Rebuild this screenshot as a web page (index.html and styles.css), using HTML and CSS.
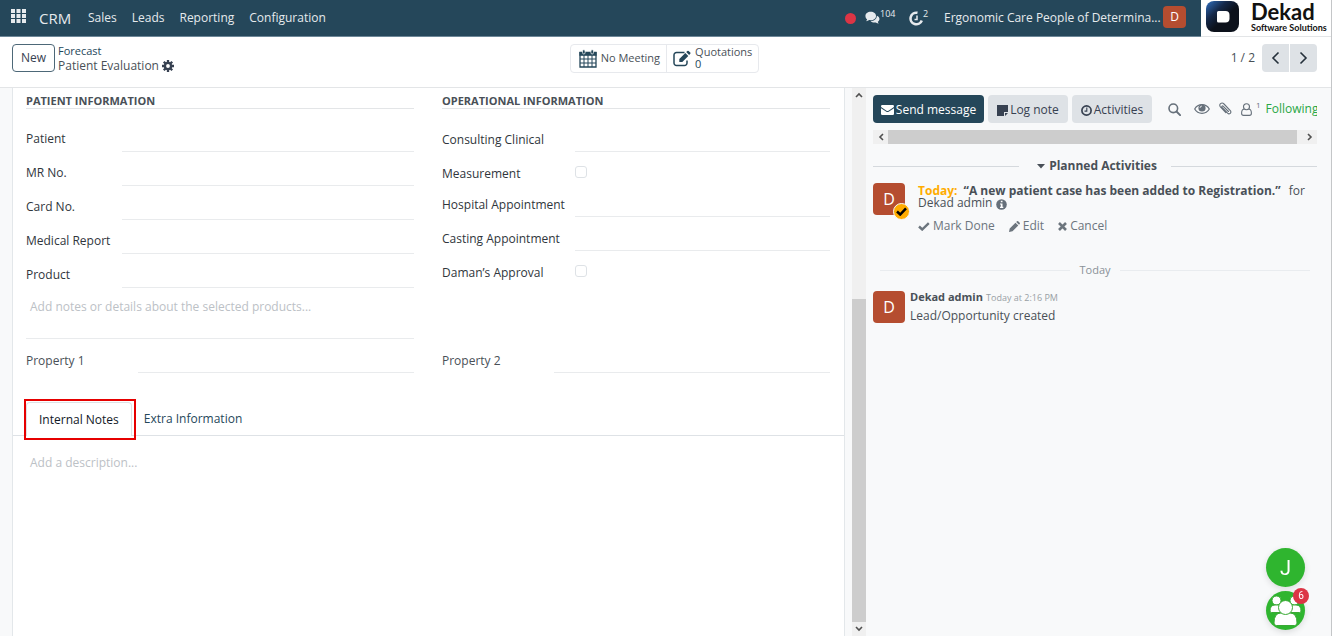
FILE: index.html
```html
<!DOCTYPE html>
<html lang="en">
<head>
  <meta charset="UTF-8">
  <meta name="viewport" content="width=device-width, initial-scale=1.0">
  <title>Patient Evaluation</title>
  <link rel="stylesheet" href="styles.css">
</head>
<body>
  <header class="navbar">
    <button class="apps" aria-label="Apps">
      <svg width="15" height="14" viewBox="0 0 15 14"><path d="M0 0h4v4H0zM5.500 0h4v4h-4zM11 0h4v4h-4zM0 5h4v4H0zM5.500 5h4v4h-4zM11 5h4v4h-4zM0 10h4v4H0zM5.500 10h4v4h-4zM11 10h4v4h-4z"/></svg>
    </button>
    <a class="brand" href="#">CRM</a>
    <nav class="menu">
      <a href="#">Sales</a>
      <a href="#">Leads</a>
      <a href="#">Reporting</a>
      <a href="#">Configuration</a>
    </nav>
    <div class="systray">
      <span class="dot"></span>
      <button class="tray-btn messages" aria-label="Messages">
        <svg width="15" height="14" viewBox="0 0 17 15"><path d="M6.500.5C10 .5 12.500 2.500 12.500 5.200S10 10 6.500 10c-.6 0-1.200-.1-1.700-.2-1 .8-2.300 1.300-3.600 1.300.6-.6 1.100-1.300 1.200-2.100C1.200 8.100.5 6.800.5 5.200.5 2.500 3 .5 6.500.5z"/><path d="M13.400 5c1.800.7 3 2 3 3.600 0 1.300-.7 2.400-1.900 3.100.1.800.5 1.500 1.200 2.100-1.300 0-2.500-.5-3.500-1.300-2 .4-4.500 0-5.900-1.400C10.500 11 13.500 8.500 13.400 5z"/></svg>
        <sup>104</sup>
      </button>
      <button class="tray-btn activity" aria-label="Activities">
        <svg width="14" height="15" viewBox="0 0 14 15"><path d="M8.500 1.800A5.800 5.800 0 1 0 12.800 9.500" fill="none" stroke="currentColor" stroke-width="2.600"/><path d="M8 4.500v4H5.500" fill="none" stroke="currentColor" stroke-width="1.500"/></svg>
        <sup>2</sup>
      </button>
      <button class="company">Ergonomic Care People of Determina...</button>
      <button class="avatar avatar-small">D</button>
    </div>
    <a class="logo" href="#">
      <svg width="33" height="31" viewBox="0 0 33 31">
        <defs>
          <linearGradient id="logo-fill" x1="0" y1="0" x2="0.8" y2="0.8">
            <stop offset="0" stop-color="#2f6fc0"/>
            <stop offset="0.4" stop-color="#15294a"/>
            <stop offset="0.7" stop-color="#0c111b"/>
          </linearGradient>
        </defs>
        <rect width="33" height="31" rx="8" fill="url(#logo-fill)"/>
        <path d="M12.500 10h7a4 4 0 0 1 4 4v3.500a4 4 0 0 1-4 4h-7a1.500 1.500 0 0 1-1.500-1.500v-8.500a1.500 1.500 0 0 1 1.500-1.500z" fill="#fff"/>
      </svg>
      <span class="logo-text"><strong>Dekad</strong><small>Software Solutions</small></span>
    </a>
  </header>

  <div class="control-panel">
    <div class="panel-left">
      <button class="btn-new">New</button>
      <div class="breadcrumb">
        <a href="#">Forecast</a>
        <div class="current">
          <span>Patient Evaluation</span>
          <button aria-label="Settings">
            <svg width="12" height="12" viewBox="0 0 12 12"><g fill="none" stroke="currentColor"><circle cx="6" cy="6" r="3.100" stroke-width="2.400"/><path d="M6 0v2.500M6 9.500V12M0 6h2.500M9.500 6H12M1.800 1.800l1.700 1.700M8.500 8.500l1.700 1.700M1.800 10.200l1.700-1.700M8.500 3.500l1.700-1.700" stroke-width="2.300"/></g></svg>
          </button>
        </div>
      </div>
    </div>
    <div class="stat-buttons">
      <button class="stat">
        <svg width="18" height="19" viewBox="0 0 18 19"><path d="M1 3.500h16V18H1z" fill="none" stroke="currentColor" stroke-width="1.300"/><path d="M.4 3h17.200v3.800H.4z"/><path d="M1 10h16M1 14h16M5 6v12M9 6v12M13 6v12" stroke="currentColor"/><rect x="3.500" y=".7" width="2.600" height="4.300" rx="1.300" stroke="#fff" stroke-width=".7"/><rect x="11.900" y=".7" width="2.600" height="4.300" rx="1.300" stroke="#fff" stroke-width=".7"/></svg>
        <span>No Meeting</span>
      </button>
      <button class="stat">
        <svg width="18" height="17" viewBox="0 0 18 17"><path d="M11.500 2.500H3.500a2.500 2.500 0 0 0-2.500 2.500v8a2.500 2.500 0 0 0 2.500 2.500h8A2.500 2.500 0 0 0 14 13v-2.500" fill="none" stroke="currentColor" stroke-width="1.500"/><path d="M6.300 12V9l6-6 3 3-6 6zM13.200 2.100l1.200-1.200q.6-.5 1.200 0l1.700 1.700q.5.600 0 1.200l-1.200 1.200z"/></svg>
        <span>Quotations<br><b>0</b></span>
      </button>
    </div>
    <div class="pager">
      <span>1 / 2</span>
      <div class="pager-buttons">
        <button aria-label="Previous"><svg width="9" height="14" viewBox="0 0 9 14"><path d="M7.500 1.500L2 7l5.500 5.500"/></svg></button>
        <button aria-label="Next"><svg width="9" height="14" viewBox="0 0 9 14"><path d="M1.500 1.500L7 7l-5.500 5.500"/></svg></button>
      </div>
    </div>
  </div>

  <div class="content">
    <main class="form-view">
      <form class="sheet">
        <div class="groups">
          <section class="group patient">
            <h2>Patient Information</h2>
            <div class="field"><label for="patient">Patient</label><input type="text" id="patient"></div>
            <div class="field"><label for="mr">MR No.</label><input type="text" id="mr"></div>
            <div class="field"><label for="card">Card No.</label><input type="text" id="card"></div>
            <div class="field"><label for="report">Medical Report</label><input type="text" id="report"></div>
            <div class="field"><label for="product">Product</label><input type="text" id="product"></div>
            <textarea class="notes" aria-label="Notes" placeholder="Add notes or details about the selected products..."></textarea>
          </section>
          <section class="group operational">
            <h2>Operational Information</h2>
            <div class="field"><label for="clinical">Consulting Clinical</label><input type="text" id="clinical"></div>
            <div class="field field-check"><label for="measurement">Measurement</label><input type="checkbox" id="measurement"></div>
            <div class="field"><label for="hospital">Hospital Appointment</label><input type="text" id="hospital"></div>
            <div class="field"><label for="casting">Casting Appointment</label><input type="text" id="casting"></div>
            <div class="field field-check"><label for="approval">Daman’s Approval</label><input type="checkbox" id="approval"></div>
          </section>
          <div class="field property"><label for="prop1">Property 1</label><input type="text" id="prop1"></div>
          <div class="field property"><label for="prop2">Property 2</label><input type="text" id="prop2"></div>
        </div>
        <div class="tabs">
          <button type="button" class="tab active">Internal Notes</button>
          <button type="button" class="tab">Extra Information</button>
        </div>
        <textarea class="description" aria-label="Description" placeholder="Add a description..."></textarea>
      </form>
      <div class="scroll-v">
        <button aria-label="Scroll up"><svg width="8" height="6" viewBox="0 0 8 6"><path d="M1 5l3-3 3 3"/></svg></button>
        <div class="thumb"></div>
        <button aria-label="Scroll down"><svg width="8" height="6" viewBox="0 0 8 6"><path d="M1 1l3 3 3-3"/></svg></button>
      </div>
    </main>

    <aside class="chatter">
      <div class="chatter-top">
        <button class="btn btn-primary">
          <svg width="13" height="10" viewBox="0 0 13 10"><path d="M0 1.200Q0 0 1.200 0h10.600Q13 0 13 1.200q0 .8-.8 1.300L7.500 5.700q-1 .7-2 0L.8 2.500Q0 2 0 1.200zM0 3.200l5 3.400q1.500 1 3 0l5-3.400v5.600q0 1.200-1.200 1.200H1.200Q0 10 0 8.800z"/></svg>
          Send message
        </button>
        <button class="btn">
          <svg width="11" height="11" viewBox="0 0 11 11"><path d="M0 0h11v7H7v4H0zM8 8h3l-3 3z"/></svg>
          Log note
        </button>
        <button class="btn">
          <svg width="11" height="11" viewBox="0 0 11 11"><circle cx="5.500" cy="5.500" r="4.600" fill="none" stroke="currentColor" stroke-width="1.700"/><path d="M5.800 2.500v3.600H3.500" fill="none" stroke="currentColor" stroke-width="1.100"/></svg>
          Activities
        </button>
        <div class="tools">
          <button aria-label="Search"><svg width="13" height="13" viewBox="0 0 13 13"><circle cx="5.300" cy="5.300" r="4.300" fill="none" stroke="currentColor" stroke-width="1.600"/><path d="M8.500 8.500l3.600 3.600" stroke="currentColor" stroke-width="1.900" stroke-linecap="round"/></svg></button>
          <button aria-label="Preview"><svg width="16" height="12" viewBox="0 0 16 12"><path d="M.7 6C4 .2 12 .2 15.300 6 12 11.800 4 11.800.7 6z" fill="none" stroke="currentColor" stroke-width="1.200"/><circle cx="8" cy="5" r="3.600"/><path d="M6 5a2 2 0 0 1 2-2" fill="none" stroke="#f8f9fa" stroke-width=".8"/></svg></button>
          <button aria-label="Attach files"><svg width="13" height="14" viewBox="0 0 13 14"><path d="M9.500 9.500L4.300 4.300c-1-1-2 .1-1.200 1l5.500 5.900c1.700 1.700 4.500-.6 2.700-2.600L5 2C2.700-.4-.7 2.500 1.400 4.900l5.400 5.800" fill="none" stroke="currentColor" stroke-width="1.100" stroke-linecap="round"/></svg></button>
          <button class="followers" aria-label="Followers"><svg width="11" height="13" viewBox="0 0 11 13"><circle cx="5.500" cy="3.700" r="3" fill="none" stroke="currentColor" stroke-width="1.100"/><path d="M3 6C1 6.400.6 8.400.6 10.200c0 1.400.8 2.200 2 2.200h5.800c1.200 0 2-.8 2-2.200C10.400 8.400 10 6.400 8 6" fill="none" stroke="currentColor" stroke-width="1.100"/></svg><sup>1</sup></button>
          <button class="following">Following</button>
        </div>
      </div>
      <div class="scroll-h">
        <button aria-label="Scroll left"><svg width="6" height="8" viewBox="0 0 6 8"><path d="M5 1L2 4l3 3"/></svg></button>
        <div class="thumb"></div>
        <button aria-label="Scroll right"><svg width="6" height="8" viewBox="0 0 6 8"><path d="M1 1l3 3-3 3"/></svg></button>
      </div>

      <h3 class="planned">
        <svg width="8" height="5" viewBox="0 0 8 5"><path d="M0 0h8L4 4.500z"/></svg>
        Planned Activities
      </h3>
      <article class="activity-item">
        <div class="avatar">D
          <span class="badge"><svg width="11" height="9" viewBox="0 0 11 9"><path d="M1 4.500l3.200 3L10 1.300" fill="none" stroke="#000" stroke-width="2.500"/></svg></span>
        </div>
        <div class="activity-body">
          <p><b class="due">Today:</b> <b class="summary">“A new patient case has been added to Registration.”</b> <span>for</span><br>Dekad admin
            <svg class="info" width="11" height="11" viewBox="0 0 11 11"><circle cx="5.500" cy="5.500" r="5.300"/><path d="M4.800 1.800h1.700v1.500H4.800zM4 4.500h2.500v3.300h.8V9H4V7.800h.8V5.600H4z" fill="#fff"/></svg>
          </p>
          <div class="actions">
            <button><svg width="12" height="9" viewBox="0 0 12 9"><path d="M1 4.500l3.200 3L10.800 1.200" fill="none" stroke="currentColor" stroke-width="2.400"/></svg>Mark Done</button>
            <button><svg width="11" height="11" viewBox="0 0 11 11"><path d="M0 11l.7-3.500L6.500 1.700l2.800 2.800-5.800 5.800zM7.200 1L8 .3q.6-.5 1.200 0l1.500 1.500q.5.600 0 1.200l-.7.800z"/></svg>Edit</button>
            <button><svg width="9" height="9" viewBox="0 0 9 9"><path d="M1 1l7 7M8 1L1 8" stroke="currentColor" stroke-width="2.600"/></svg>Cancel</button>
          </div>
        </div>
      </article>
      <div class="day">Today</div>
      <article class="message">
        <div class="avatar">D</div>
        <div>
          <p><b>Dekad admin</b> <time>Today at 2:16 PM</time></p>
          <p>Lead/Opportunity created</p>
        </div>
      </article>

      <div class="chat-bubbles">
        <button class="bubble">J</button>
        <button class="bubble" aria-label="Team chat">
          <svg width="39" height="39" viewBox="0 0 39 39"><g fill="#fff" stroke="#3aaa35" stroke-width="1"><circle cx="10.500" cy="9.500" r="4.500"/><circle cx="28.500" cy="9.500" r="4.500"/><path d="M4 20q0-6 5-6h4q4 0 4 6v1.500H5.500Q4 21.500 4 20zM35 20q0-6-5-6h-4q-4 0-4 6v1.500h11.500q1.500 0 1.500-1.500z"/><path d="M8 32q0-10 7-10h9q7 0 7 10 0 2.500-2.500 2.500h-18Q8 34.500 8 32z"/><circle cx="19.500" cy="16.500" r="7"/></g></svg>
          <span class="count">6</span>
        </button>
      </div>
    </aside>
  </div>
</body>
</html>
```
FILE: styles.css
```css
* {
  box-sizing: border-box;
}

body {
  margin: 0;
  height: 100vh;
  display: flex;
  flex-direction: column;
  overflow: hidden;
  border-right: 1px solid #c4c6c8;
  background: #f8f9fa;
  color: #495057;
  font-family: "Open Sans", "Noto Sans", sans-serif;
  font-size: 12px;
  line-height: 16px;
}

a {
  color: inherit;
  text-decoration: none;
}

button {
  padding: 0;
  border: 0;
  background: none;
  color: inherit;
  font: inherit;
  cursor: pointer;
}

svg {
  flex: none;
  fill: currentColor;
}

p,
h2,
h3 {
  margin: 0;
}

/* top bar */
.navbar {
  display: flex;
  align-items: center;
  flex: none;
  height: 37px;
  padding-left: 11px;
  border-bottom: 1px solid #6d8798;
  background: #25475a;
  color: #e6eaed;
}

.apps {
  display: flex;
  margin-bottom: 4px;
}

.brand {
  width: 49px;
  padding-left: 13px;
  font-size: 15px;
}

.menu {
  display: flex;
  gap: 15px;
  padding-left: 13px;
}

.systray {
  display: flex;
  align-items: center;
  margin-left: auto;
  padding-right: 15px;
}

.dot {
  width: 11px;
  height: 11px;
  margin-right: 9px;
  border-radius: 50%;
  background: #dc3545;
}

.tray-btn {
  display: flex;
  align-items: center;
}

.tray-btn sup {
  margin-bottom: 8px;
  font-size: 9px;
  line-height: 10px;
}

.messages {
  width: 44px;
}

.activity {
  width: 35px;
}

.company {
  width: 219px;
  text-align: left;
  white-space: nowrap;
}

.avatar {
  position: relative;
  display: flex;
  align-items: center;
  justify-content: center;
  flex: none;
  width: 32px;
  height: 32px;
  border-radius: 4px;
  background: #b54d30;
  color: #fff;
  font-size: 16px;
}

.avatar-small {
  width: 23px;
  height: 22px;
  margin-bottom: 3px;
  font-size: 12px;
}

.logo {
  display: flex;
  gap: 12px;
  width: 130px;
  height: 37px;
  padding: 1px 0 0 5px;
  border-bottom: 1px solid #e3e5e7;
  background: #fff;
  color: #111;
  white-space: nowrap;
}

.logo-text {
  display: flex;
  flex-direction: column;
  font-family: Lato, sans-serif;
}

.logo-text strong {
  font-size: 22px;
  line-height: 22px;
}

.logo-text small {
  font-size: 9px;
  font-weight: bold;
  line-height: 9px;
}

/* control panel */
.control-panel {
  display: grid;
  grid-template-columns: 1fr auto 1fr;
  align-items: center;
  flex: none;
  height: 51px;
  padding: 0 14px 8px 12px;
  border-bottom: 1px solid #e3e5e7;
  background: #fff;
}

.panel-left,
.current,
.stat-buttons,
.stat,
.pager,
.pager-buttons {
  display: flex;
  align-items: center;
}

.panel-left {
  gap: 3px;
}

.btn-new {
  width: 43px;
  height: 28px;
  border: 1px solid #4d6878;
  border-radius: 4px;
  color: #374151;
}

.breadcrumb {
  line-height: 15px;
}

.breadcrumb > a {
  color: #25475a;
  font-size: 11px;
}

.current {
  gap: 3px;
}

.current button {
  display: flex;
  color: #374151;
}

.stat-buttons {
  border: 1px solid #e7e9ed;
  border-radius: 4px;
}

.stat {
  gap: 4px;
  height: 27px;
  padding: 0 6px 0 8px;
  font-size: 11px;
  line-height: 12px;
  text-align: left;
}

.stat + .stat {
  padding-left: 6px;
  border-left: 1px solid #e7e9ed;
}

.stat svg,
.stat b {
  color: #25475a;
  font-weight: normal;
}

.pager {
  justify-content: flex-end;
  gap: 7px;
}

.pager-buttons {
  gap: 1px;
}

.pager-buttons button {
  width: 27px;
  height: 28px;
  border-radius: 4px 0 0 4px;
  background: #dee2e6;
  color: #25303b;
}

.pager-buttons button + button {
  border-radius: 0 4px 4px 0;
}

.pager-buttons svg,
.scroll-v svg,
.scroll-h svg {
  display: block;
  margin: auto;
  fill: none;
  stroke: currentColor;
  stroke-width: 1.6;
}

/* form */
.content {
  display: grid;
  grid-template-columns: 1fr 465px;
  flex: 1;
  min-height: 0;
}

.form-view {
  display: flex;
  gap: 7px;
  padding-left: 12px;
}

.sheet {
  flex: 1;
  border: solid #e3e7ea;
  border-width: 0 1px;
  background: #fff;
}

.groups {
  display: grid;
  grid-template-columns: 1fr 1fr;
  column-gap: 28px;
  padding: 5px 14px 0 13px;
}

.group h2 {
  margin-bottom: 9px;
  border-bottom: 1px solid #e3e5e7;
  font-size: 11px;
  line-height: 15px;
  text-transform: uppercase;
}

.field {
  display: grid;
  grid-template-columns: 96px 1fr;
  height: 34px;
  color: #30363c;
}

.operational .field {
  grid-template-columns: 133px 1fr;
}

.field label {
  padding-top: 13px;
  white-space: nowrap;
}

.operational label,
.property label {
  padding-top: 14px;
}

.field input[type="text"] {
  width: 100%;
  min-width: 0;
  padding: 8px 0 0;
  border: 0;
  border-bottom: 1px solid #e9ebed;
  background: none;
  font: inherit;
}

.operational .field-check {
  height: 31px;
}

.field input[type="checkbox"] {
  appearance: none;
  width: 12px;
  height: 12px;
  margin: 14px 0 0;
  border: 1px solid #dee2e6;
  border-radius: 3px;
}

.groups .property {
  grid-template-columns: 112px 1fr;
  color: #495057;
}

textarea {
  display: block;
  width: 100%;
  border: 0;
  outline: 0;
  background: none;
  font: inherit;
  resize: none;
}

textarea::placeholder {
  color: #bcc1c6;
}

.notes {
  height: 51px;
  padding: 11px 4px;
  border-bottom: 1px solid #e9ebed;
}

.tabs {
  display: flex;
  margin-top: 29px;
  padding-left: 13px;
  border-bottom: 1px solid #dee2e6;
}

.tab {
  height: 33px;
  padding: 0 12px;
  color: #25475a;
}

.tab.active {
  position: relative;
  height: 34px;
  margin-bottom: -1px;
  border: 1px solid #dee2e6;
  border-bottom: 0;
  border-radius: 4px 4px 0 0;
  background: #fff;
  color: #111827;
}

.tab.active::after {
  content: "";
  position: absolute;
  inset: -4px -5px -4px -3px;
  border: 2px solid #e60000;
}

.description {
  height: 60px;
  padding: 19px 17px;
}

.scroll-v {
  display: flex;
  flex-direction: column;
  width: 14px;
  background: #f0f0f0;
  color: #505050;
}

.scroll-v button {
  height: 14px;
}

.scroll-v .thumb {
  flex: 1;
  margin-top: calc((100vh - 116px) * 0.378);
}

.thumb {
  background: #cdcdcd;
}

/* chatter */
.chatter {
  min-width: 0;
  padding: 7px 14px 0 7px;
}

.chatter-top {
  display: flex;
  gap: 4px;
  overflow: hidden;
  white-space: nowrap;
}

.btn {
  display: flex;
  align-items: center;
  justify-content: center;
  gap: 2px;
  flex: none;
  width: 80px;
  height: 28px;
  padding-top: 2px;
  border-radius: 4px;
  background: #dee2e6;
  color: #374151;
}

.btn-primary {
  width: 111px;
  background: #25475a;
  color: #fff;
}

.tools {
  display: flex;
  align-items: center;
  flex: none;
  padding-left: 12px;
  color: #66707a;
}

.tools button {
  display: flex;
  align-items: center;
  margin-right: 9px;
}

.tools button:first-child {
  margin-right: 13px;
}

.tools sup {
  margin: 0 0 8px 4px;
  font-size: 8px;
  line-height: 10px;
}

.tools .followers {
  margin-right: 5px;
}

.tools .following {
  margin: 0;
  color: #28a745;
}

.scroll-h {
  display: flex;
  height: 14px;
  margin-top: 7px;
  background: #f0f0f0;
  color: #505050;
}

.scroll-h button {
  width: 15px;
}

.scroll-h .thumb {
  flex: 1;
  margin-right: 5px;
}

.planned {
  display: flex;
  align-items: center;
  gap: 4px;
  margin-top: 14px;
  font-size: 12px;
}

.planned::before,
.planned::after,
.day::before,
.day::after {
  content: "";
  flex: 1;
  height: 1px;
  background: #d5d9dd;
}

.planned::before {
  margin-right: 14px;
}

.planned::after {
  margin-left: 10px;
}

.activity-item {
  display: flex;
  gap: 13px;
  margin-top: 9px;
}

.badge {
  position: absolute;
  right: -5px;
  bottom: -5px;
  display: flex;
  align-items: center;
  justify-content: center;
  width: 17px;
  height: 17px;
  border: 1px solid #f8f9fa;
  border-radius: 50%;
  background: #ffac00;
}

.activity-body {
  min-width: 0;
  padding-top: 2px;
  line-height: 12px;
  white-space: nowrap;
}

.due {
  margin-right: 3px;
  color: #ffac00;
}

.summary {
  margin-right: 5px;
}

.info {
  vertical-align: -3px;
  color: #66707a;
}

.actions {
  display: flex;
  gap: 14px;
  margin-top: 8px;
  line-height: 16px;
  color: #6c757d;
}

.actions button {
  display: flex;
  align-items: center;
  gap: 3px;
}

.day {
  display: flex;
  align-items: center;
  gap: 9px;
  margin: 28px 7px 13px;
  color: #8a9198;
  font-size: 11px;
}

.day::before,
.day::after {
  background: #e9ecef;
}

.message {
  display: flex;
  gap: 5px;
}

.message p {
  line-height: 18px;
}

.message b {
  font-size: 11px;
}

.message time {
  color: #999fa5;
  font-size: 9px;
}

.message > div:last-child {
  margin-top: -3px;
}

.chat-bubbles {
  position: fixed;
  right: 27px;
  bottom: 6px;
  display: flex;
  flex-direction: column;
  gap: 4px;
}

.bubble {
  position: relative;
  width: 39px;
  height: 39px;
  border-radius: 50%;
  background: #2fb52f;
  box-shadow: 0 2px 6px #00000020;
  color: #fff;
  font-family: Roboto, sans-serif;
  font-size: 20px;
}

.bubble svg {
  display: block;
}

.count {
  position: absolute;
  top: -3px;
  right: -4px;
  width: 16px;
  height: 16px;
  border-radius: 50%;
  background: #dc3545;
  font-size: 10px;
  line-height: 16px;
}
```
